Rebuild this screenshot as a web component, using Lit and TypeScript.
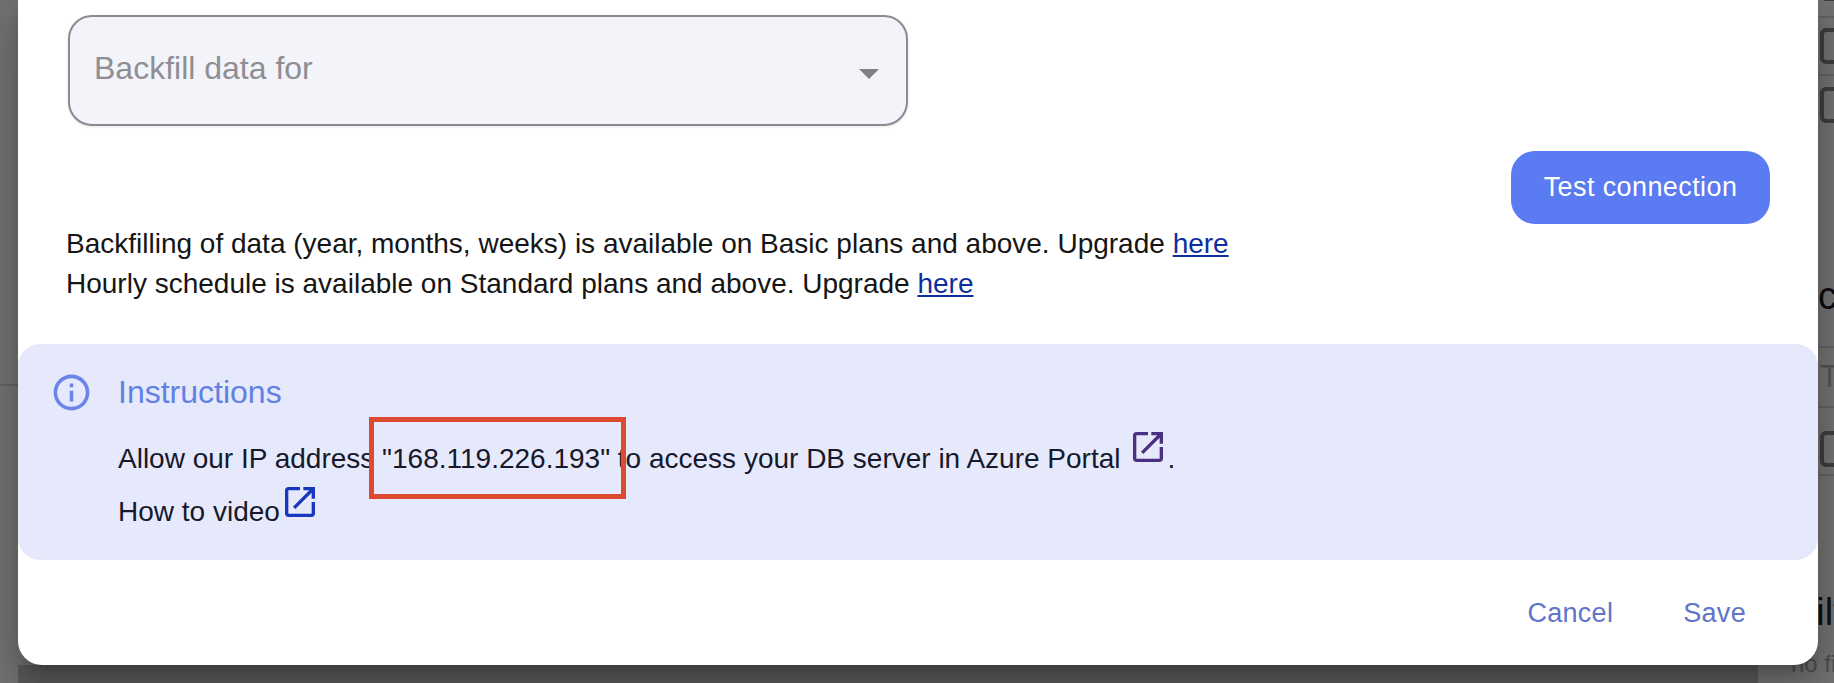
import { LitElement, html, css, svg } from "lit";
import { customElement } from "lit/decorators.js";

const openIcon = svg`<path d="M19 19H5V5h7V3H5c-1.11 0-2 .9-2 2v14c0 1.1.89 2 2 2h14c1.1 0 2-.9 2-2v-7h-2v7zM14 3v2h3.59l-9.83 9.83 1.41 1.41L19 6.41V10h2V3h-7z"/>`;
const infoIcon = svg`<path d="M11 7h2v2h-2zm0 4h2v6h-2zm1-9C6.48 2 2 6.48 2 12s4.48 10 10 10 10-4.48 10-10S17.52 2 12 2zm0 18c-4.41 0-8-3.59-8-8s3.59-8 8-8 8 3.59 8 8-3.59 8-8 8z"/>`;

@customElement("app-root")
export class AppRoot extends LitElement {
  static styles = css`
    :host {
      display: block;
      position: relative;
      width: 1834px;
      height: 683px;
      overflow: hidden;
      background: #737374;
      font-family: "Liberation Sans", Arial, sans-serif;
    }
    /* page dimmed behind the dialog */
    .page {
      position: absolute;
      inset: 0;
      display: flex;
    }
    .left-strip {
      flex: none;
      width: 18px;
      height: 384px;
      border-bottom: 2px solid #646464;
    }
    .bottom-band {
      flex: none;
      width: 1740px;
      align-self: flex-end;
      height: 18px;
      background: #5b5b5b;
    }
    .col {
      flex: none;
      width: 98px;
      margin-left: -22px;
      display: flex;
      flex-direction: column;
      overflow: hidden;
      color: #111;
    }
    .row {
      flex: none;
      box-sizing: border-box;
      display: flex;
      align-items: center;
      padding-left: 84px;
      white-space: nowrap;
      border-bottom: 2px solid #646466;
    }
    .r1 { height: 18px; }
    .r2 { height: 58px; }
    .r3 { height: 58px; border-bottom: none; }
    .r4 { height: 214px; align-items: flex-end; padding-left: 82px; padding-bottom: 31px; font-size: 38px; line-height: 38px; color: #0d0d0d; }
    .r5 { height: 60px; font-size: 31px; color: #555; }
    .r6 { height: 68px; }
    .r6 .box { margin-top: 16px; }
    .r7 { height: 155px; border-bottom: none; align-items: flex-end; padding-left: 57px; font-size: 38px; line-height: 38px; color: #111; }
    .r8 { height: 52px; border-bottom: none; padding: 21px 0 0 55px; font-size: 24px; line-height: 24px; color: #4f4f4f; align-items: flex-start; }
    .r1 .box { margin-top: -50px; }
    .box {
      flex: none;
      box-sizing: border-box;
      width: 36px;
      height: 36px;
      border: 4px solid #3e3e41;
      border-radius: 6px;
    }

    .dialog {
      position: absolute;
      left: 18px;
      top: 0;
      box-sizing: border-box;
      width: 1800px;
      height: 665px;
      display: flex;
      flex-direction: column;
      background: #fff;
      border-radius: 0 0 24px 24px;
      box-shadow: 0 11px 15px -7px rgba(0, 0, 0, 0.2), 0 24px 38px 3px rgba(0, 0, 0, 0.14), 0 9px 46px 8px rgba(0, 0, 0, 0.12);
    }
    .select {
      flex: none;
      box-sizing: border-box;
      display: flex;
      align-items: center;
      justify-content: space-between;
      margin: 15px 0 0 50px;
      width: 840px;
      height: 111px;
      padding: 0 27px 0 24px;
      background: #f3f3fa;
      border: 2px solid #8a8a8f;
      border-radius: 24px;
      box-shadow: 0 1px 3px rgba(0, 0, 0, 0.1);
      color: #8e8e93;
      font-size: 32px;
    }
    .select span { margin-top: -5px; }
    .arrow {
      width: 0;
      height: 0;
      margin-top: 7px;
      border-left: 10px solid transparent;
      border-right: 10px solid transparent;
      border-top: 10px solid #7f7f84;
    }
    .actions { flex: none; display: flex; justify-content: flex-end; margin: 25px 48px 0 0; }
    .test {
      box-sizing: border-box;
      width: 259px;
      height: 73px;
      border: none;
      border-radius: 24px;
      background: #5a7bf1;
      color: #fff;
      font: 27px "Liberation Sans", Arial, sans-serif;
      letter-spacing: 0.4px;
      padding: 0;
    }
    .notes { flex: none; margin: 0 0 0 48px; font-size: 28px; line-height: 40px; color: #151515; }
    .notes a { color: #0b2f9f; text-decoration: underline; }
    .panel {
      position: relative;
      flex: none;
      box-sizing: border-box;
      height: 216px;
      margin-top: 40px;
      display: flex;
      gap: 26px;
      padding: 27px 0 0 32px;
      background: #e6e9fb;
      border-radius: 22px;
    }
    .info { flex: none; width: 43px; height: 43px; fill: #6a85e6; }
    .pbody { display: flex; flex-direction: column; color: #17192b; font-size: 28px; margin-left: -1px; }
    .ptitle { font-size: 32px; line-height: 42px; color: #6081e3; }
    .pline { display: flex; align-items: flex-start; line-height: 40px; white-space: pre; }
    .l1 { margin-top: 26px; height: 53px; }
    .ext { flex: none; width: 40px; height: 40px; }
    .ext.purple { fill: #4b2f82; margin: -12px 0 0 7px; }
    .ext.blue { fill: #1638bd; margin: -10px 0 0 0; }
    .mark {
      position: absolute;
      left: 351px;
      top: 73px;
      box-sizing: border-box;
      width: 257px;
      height: 82px;
      border: 5px solid #dd4a32;
    }
    .footer { flex: none; display: flex; justify-content: flex-end; gap: 70px; margin: 38px 72px 0 0; font-size: 27px; letter-spacing: 0.3px; color: #5f74ca; }
  `;

  render() {
    return html`
      <div class="page">
        <div class="left-strip"></div>
        <div class="bottom-band"></div>
        <div class="col">
          <div class="row r1"><div class="box"></div></div>
          <div class="row r2"><div class="box"></div></div>
          <div class="row r3"><div class="box"></div></div>
          <div class="row r4">connections</div>
          <div class="row r5">Type</div>
          <div class="row r6"><div class="box"></div></div>
          <div class="row r7">Filters</div>
          <div class="row r8">no filters</div>
        </div>
      </div>
      <div class="dialog">
        <div class="select"><span>Backfill data for</span><div class="arrow"></div></div>
        <div class="actions"><button class="test">Test connection</button></div>
        <div class="notes">
          <div>Backfilling of data (year, months, weeks) is available on Basic plans and above. Upgrade <a href="#">here</a></div>
          <div>Hourly schedule is available on Standard plans and above. Upgrade <a href="#">here</a></div>
        </div>
        <div class="panel">
          <svg class="info" viewBox="0 0 24 24">${infoIcon}</svg>
          <div class="pbody">
            <div class="ptitle">Instructions</div>
            <div class="pline l1">Allow our IP address "168.119.226.193" to access your DB server in Azure Portal<svg class="ext purple" viewBox="0 0 24 24">${openIcon}</svg>.</div>
            <div class="pline">How to video<svg class="ext blue" viewBox="0 0 24 24">${openIcon}</svg></div>
          </div>
          <div class="mark"></div>
        </div>
        <div class="footer"><span>Cancel</span><span>Save</span></div>
      </div>
    `;
  }
}
